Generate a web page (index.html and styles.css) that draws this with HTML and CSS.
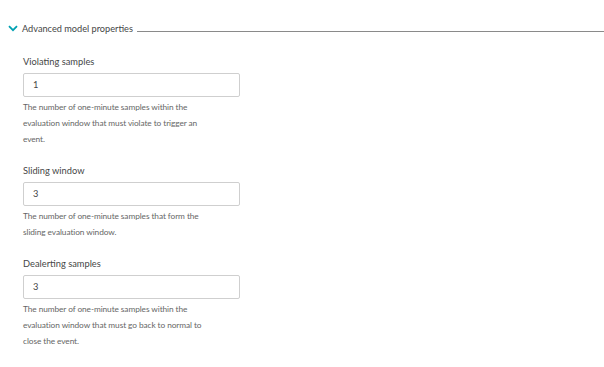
FILE: index.html
```html
<!DOCTYPE html>
<html>
<head>
<meta charset="utf-8">
<link rel="stylesheet" href="styles.css">
</head>
<body>
<div class="section">
  <div class="header">
    <svg class="chev" width="10" height="7" viewBox="0 0 10 7"><path d="M1 1.2 L5 5.2 L9 1.2" fill="none" stroke="#00a1b2" stroke-width="1.8"/></svg>
    <span class="title">Advanced model properties</span>
    <span class="rule"></span>
  </div>
  <div class="fields">
    <div class="field">
      <div class="label">Violating samples</div>
      <div class="input">1</div>
      <div class="help">The number of one-minute samples within the evaluation window that must violate to trigger an event.</div>
    </div>
    <div class="field">
      <div class="label">Sliding window</div>
      <div class="input">3</div>
      <div class="help">The number of one-minute samples that form the sliding evaluation window.</div>
    </div>
    <div class="field">
      <div class="label">Dealerting samples</div>
      <div class="input">3</div>
      <div class="help">The number of one-minute samples within the evaluation window that must go back to normal to close the event.</div>
    </div>
  </div>
</div>
</body>
</html>
```

FILE: styles.css
```css
html, body {
  margin: 0;
  padding: 0;
  background: #ffffff;
}
body {
  font-family: "Lato", "Open Sans", sans-serif;
  color: #454646;
}
.section {
  padding: 21px 0 0 8px;
}
.header {
  display: flex;
  align-items: center;
  height: 14px;
}
.chev {
  flex: none;
  margin-right: 4px;
}
.title {
  font-size: 9.2px;
  color: #454646;
  white-space: nowrap;
}
.rule {
  flex: 1;
  height: 0;
  border-bottom: 1px solid #8a8a8a;
  margin-left: 4px;
  margin-top: 6px;
}
.fields {
  padding-left: 15px;
  padding-top: 20px;
  display: flex;
  flex-direction: column;
  gap: 17px;
}
.field {
  width: 217px;
}
.label {
  font-size: 9.3px;
  line-height: 14px;
  margin-bottom: 4px;
}
.input {
  box-sizing: border-box;
  height: 24px;
  border: 1px solid #cfcfcf;
  border-radius: 2px;
  padding-left: 9px;
  font-size: 9.3px;
  line-height: 22px;
}
.help {
  margin-top: 2px;
  font-size: 8.3px;
  letter-spacing: -0.08px;
  line-height: 16px;
  color: #666666;
  width: 181px;
}
```
